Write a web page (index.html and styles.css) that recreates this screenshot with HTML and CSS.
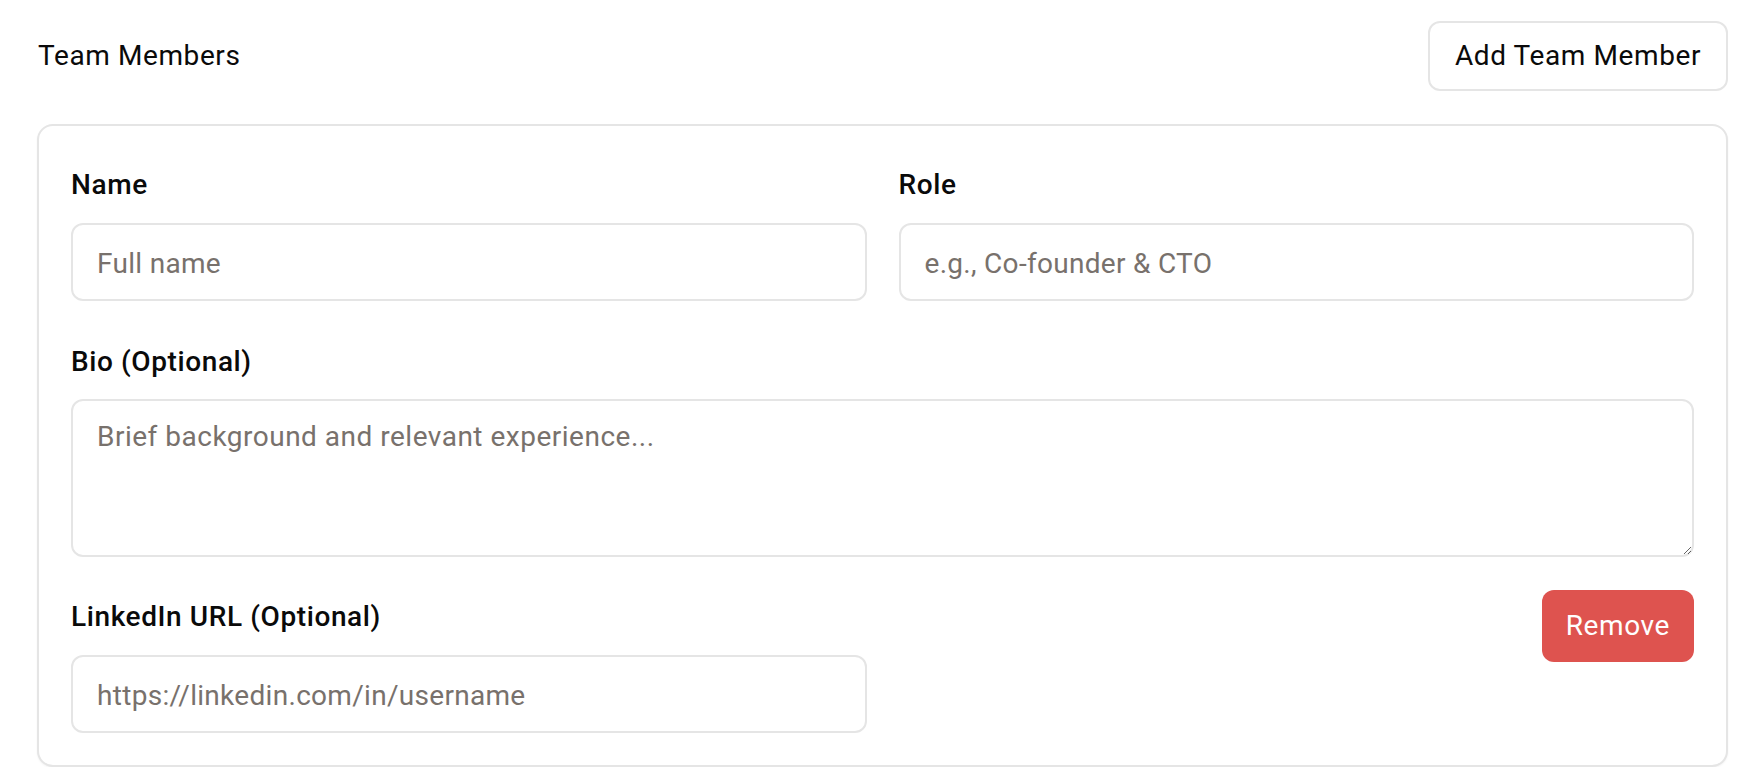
FILE: index.html
```html
<!DOCTYPE html>
<html lang="en">
<head>
<meta charset="utf-8">
<title>Team Members</title>
<link rel="stylesheet" href="styles.css">
</head>
<body>
<div class="page">
  <div class="header">
    <h2 class="title">Team Members</h2>
    <button class="btn-outline" type="button">Add Team Member</button>
  </div>
  <div class="card">
    <div class="grid">
      <div class="field">
        <label class="label">Name</label>
        <input class="input" type="text" placeholder="Full name">
      </div>
      <div class="field">
        <label class="label">Role</label>
        <input class="input" type="text" placeholder="e.g., Co-founder &amp; CTO">
      </div>
    </div>
    <div class="field row-gap">
      <label class="label">Bio (Optional)</label>
      <textarea class="textarea" placeholder="Brief background and relevant experience..."></textarea>
    </div>
    <div class="grid row-gap-2">
      <div class="field">
        <label class="label">LinkedIn URL (Optional)</label>
        <input class="input" type="text" placeholder="https://linkedin.com/in/username">
      </div>
      <div class="actions">
        <button class="btn-danger" type="button">Remove</button>
      </div>
    </div>
  </div>
</div>
</body>
</html>
```
FILE: styles.css
```css
* {
  box-sizing: border-box;
}

html, body {
  margin: 0;
  padding: 0;
  background: #ffffff;
}

body {
  font-family: Roboto, "Liberation Sans", Arial, sans-serif;
  color: #0a0a0a;
}

.page {
  padding: 21px 24px 0 37px;
}

.header {
  display: flex;
  justify-content: space-between;
  align-items: center;
  height: 70px;
  margin-bottom: 33px;
}

.title {
  margin: 0 0 0 1px;
  font-size: 28px;
  line-height: 40px;
  font-weight: 400;
  letter-spacing: 0.6px;
  color: #0a0a0a;
}

.btn-outline {
  height: 70px;
  padding: 0 25px;
  border: 2px solid #e5e5e5;
  border-radius: 12px;
  background: #ffffff;
  font-family: inherit;
  font-size: 28px;
  line-height: 40px;
  font-weight: 400;
  letter-spacing: 0.6px;
  color: #0a0a0a;
  cursor: pointer;
}

.card {
  border: 2px solid #e5e5e5;
  border-radius: 16px;
  padding: 32px;
  background: #ffffff;
  box-shadow: 0 1px 2px rgba(0, 0, 0, 0.05);
}

.grid {
  display: grid;
  grid-template-columns: 1fr 1fr;
  column-gap: 32px;
}

.field {
  display: flex;
  flex-direction: column;
}

.row-gap {
  margin-top: 34px;
}

.row-gap-2 {
  margin-top: 33px;
}

.label {
  font-size: 28px;
  line-height: 54px;
  font-weight: 500;
  letter-spacing: 0.6px;
  color: #0a0a0a;
  margin-bottom: 10.5px;
}

.input {
  width: 100%;
  height: 78px;
  padding: 19px 24px 15px;
  border: 2px solid #e5e5e5;
  border-radius: 12px;
  background: #ffffff;
  font-family: inherit;
  font-size: 28px;
  line-height: 40px;
  letter-spacing: 0.3px;
  color: #0a0a0a;
  outline: none;
}

.textarea {
  width: 100%;
  height: 158px;
  padding: 16px 24px;
  border: 2px solid #e5e5e5;
  border-radius: 12px;
  background: #ffffff;
  font-family: inherit;
  font-size: 28px;
  line-height: 40px;
  letter-spacing: 0.5px;
  color: #0a0a0a;
  resize: vertical;
  outline: none;
  display: block;
}

.input::placeholder,
.textarea::placeholder {
  color: #78716c;
  opacity: 1;
}

.actions {
  display: flex;
  justify-content: flex-end;
  align-items: flex-start;
}

.btn-danger {
  height: 71.5px;
  padding: 0 24px;
  border: none;
  border-radius: 12px;
  background: #de534f;
  color: #fefefe;
  font-family: inherit;
  font-size: 28px;
  line-height: 40px;
  font-weight: 400;
  letter-spacing: 0.6px;
  cursor: pointer;
}
```
